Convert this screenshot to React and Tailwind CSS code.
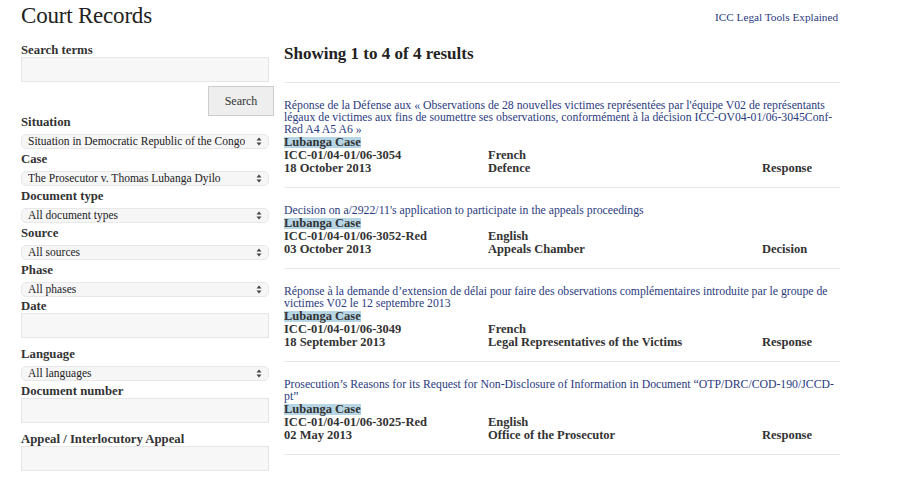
import React from 'react';

const serif = { fontFamily: '"Liberation Serif", "DejaVu Serif", serif' };

const SelectArrows = () => (
  <svg width="6" height="9" viewBox="0 0 6 9" className="shrink-0">
    <path d="M3 0.5 L5.5 3.5 H0.5 Z" fill="#444" />
    <path d="M3 8.5 L5.5 5.5 H0.5 Z" fill="#444" />
  </svg>
);

const Label = ({ children }) => (
  <div className="h-[13px] leading-[13px] text-[12.75px] font-bold text-[#333] whitespace-nowrap">{children}</div>
);

const TextBox = () => (
  <div className="h-[25px] w-[248px] bg-[#f7f7f7] border border-[#e6e6e6]" />
);

const Dropdown = ({ value }) => (
  <div className="mt-[5px] h-[15px] w-[248px] rounded-[5px] bg-[#f6f6f6] border border-[#e8e8e8] flex items-center justify-between pl-[6px] pr-[6px]">
    <span className="text-[11.5px] leading-[13px] text-[#222] truncate">{value}</span>
    <SelectArrows />
  </div>
);

const results = [
  {
    title: "Réponse de la Défense aux « Observations de 28 nouvelles victimes représentées par l'équipe V02 de représentants légaux de victimes aux fins de soumettre ses observations, conformément à la décision ICC-OV04-01/06-3045Conf-Red A4 A5 A6 »",
    number: 'ICC-01/04-01/06-3054',
    date: '18 October 2013',
    language: 'French',
    source: 'Defence',
    type: 'Response',
  },
  {
    title: "Decision on a/2922/11's application to participate in the appeals proceedings",
    number: 'ICC-01/04-01/06-3052-Red',
    date: '03 October 2013',
    language: 'English',
    source: 'Appeals Chamber',
    type: 'Decision',
  },
  {
    title: 'Réponse à la demande d’extension de délai pour faire des observations complémentaires introduite par le groupe de victimes V02 le 12 septembre 2013',
    number: 'ICC-01/04-01/06-3049',
    date: '18 September 2013',
    language: 'French',
    source: 'Legal Representatives of the Victims',
    type: 'Response',
  },
  {
    title: 'Prosecution’s Reasons for its Request for Non-Disclosure of Information in Document “OTP/DRC/COD-190/JCCD-pt”',
    number: 'ICC-01/04-01/06-3025-Red',
    date: '02 May 2013',
    language: 'English',
    source: 'Office of the Prosecutor',
    type: 'Response',
  },
];

const ResultItem = ({ item }) => (
  <div className="border-b border-[#e8e8e8] pt-[17px] pb-[12px]">
    <a className="block text-[11.75px] leading-[12px] text-[#2a3a80]">{item.title}</a>
    <div className="h-[13px] pt-[1px] text-[12.5px] font-bold text-[#333]">
      <span className="block w-fit h-[11px] leading-[11px] bg-[#b6d6e6]">Lubanga Case</span>
    </div>
    <div className="grid grid-cols-[204px_274px_1fr] text-[12.5px] leading-[13px] font-bold text-[#333]">
      <div>{item.number}</div>
      <div>{item.language}</div>
      <div></div>
      <div>{item.date}</div>
      <div>{item.source}</div>
      <div>{item.type}</div>
    </div>
  </div>
);

export default function App() {
  return (
    <div className="w-[904px] h-[498px] bg-white overflow-hidden text-[#222]" style={serif}>
      <div className="flex justify-between items-start pl-[21px] pr-[66px]">
        <h1 className="text-[23px] leading-[32px] text-[#222] tracking-[-0.2px]">Court Records</h1>
        <a className="mt-[10px] text-[11.25px] leading-[14px] text-[#2a3a80]">ICC Legal Tools Explained</a>
      </div>

      <div className="flex pl-[21px] pt-[12px]">
        <aside className="w-[253px] flex flex-col">
          <Label>Search terms</Label>
          <TextBox />
          <div className="flex justify-end mt-[4px]">
            <button className="w-[66px] h-[30px] bg-[#eeeeee] border border-[#cccccc] text-[12px] text-[#333]">Search</button>
          </div>
          <div>
            <Label>Situation</Label>
            <Dropdown value="Situation in Democratic Republic of the Congo" />
          </div>
          <div className="mt-[4px]">
            <Label>Case</Label>
            <Dropdown value="The Prosecutor v. Thomas Lubanga Dyilo" />
          </div>
          <div className="mt-[4px]">
            <Label>Document type</Label>
            <Dropdown value="All document types" />
          </div>
          <div className="mt-[4px]">
            <Label>Source</Label>
            <Dropdown value="All sources" />
          </div>
          <div className="mt-[4px]">
            <Label>Phase</Label>
            <Dropdown value="All phases" />
          </div>
          <div className="mt-[3px]">
            <Label>Date</Label>
            <TextBox />
          </div>
          <div className="mt-[10px]">
            <Label>Language</Label>
            <Dropdown value="All languages" />
          </div>
          <div className="mt-[4px]">
            <Label>Document number</Label>
            <TextBox />
          </div>
          <div className="mt-[10px]">
            <Label>Appeal / Interlocutory Appeal</Label>
            <TextBox />
          </div>
        </aside>

        <main className="ml-[10px] w-[556px]">
          <h2 className="text-[17px] leading-[20px] font-bold text-[#222] pb-[18px] border-b border-[#e8e8e8]">
            Showing 1 to 4 of 4 results
          </h2>
          {results.map((item) => (
            <ResultItem key={item.number} item={item} />
          ))}
        </main>
      </div>
    </div>
  );
}
